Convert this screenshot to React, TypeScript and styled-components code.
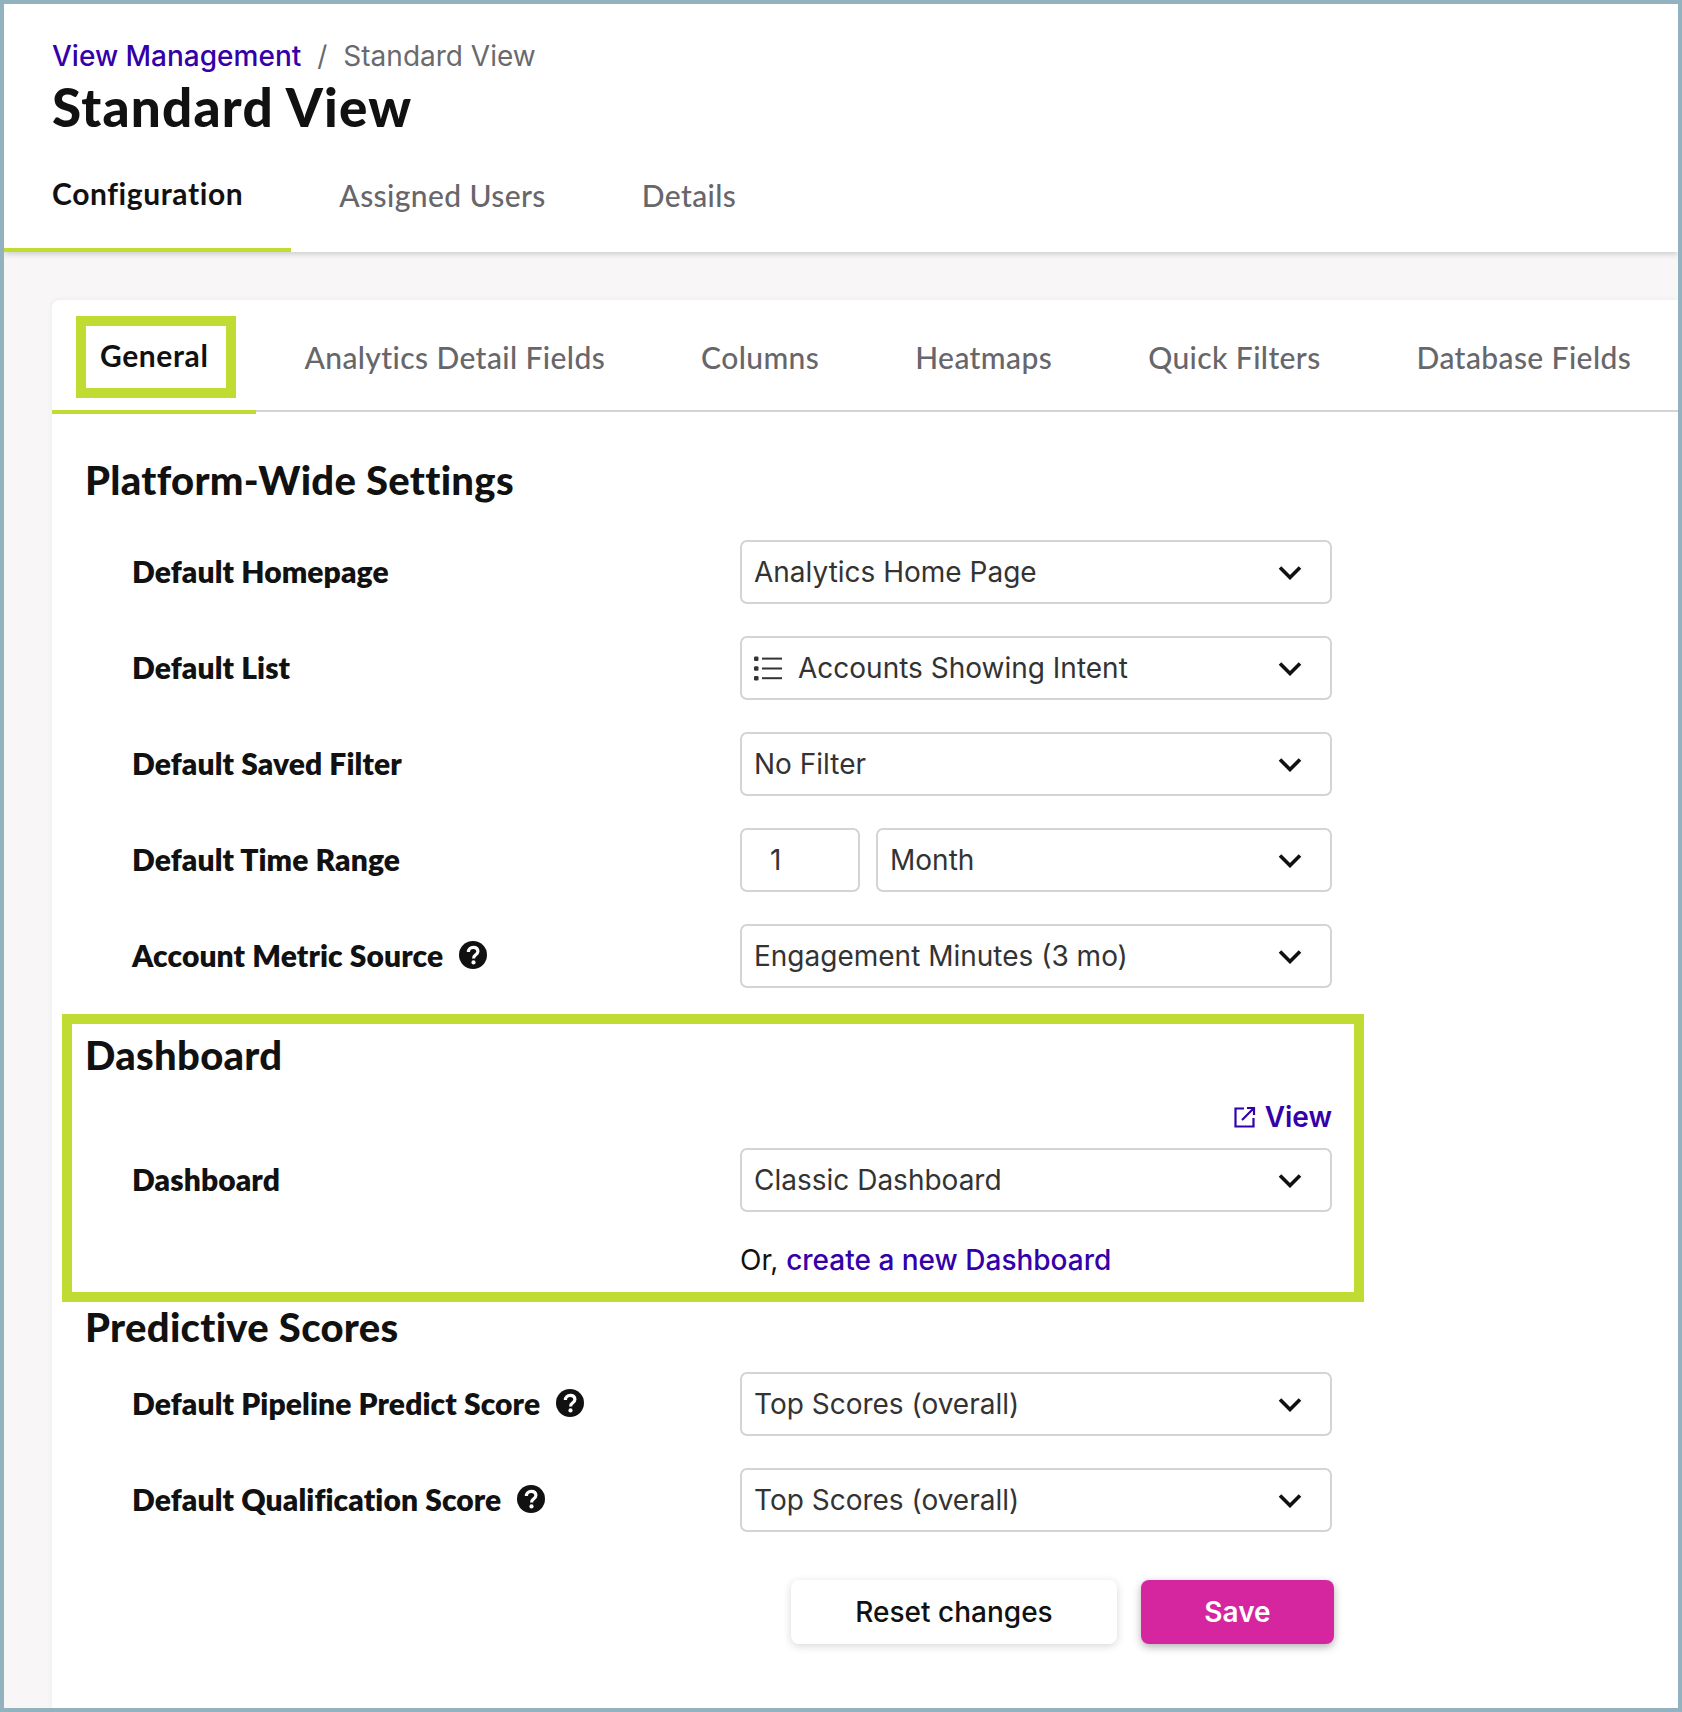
import React from "react";
import styled, { createGlobalStyle } from "styled-components";

const GlobalStyle = createGlobalStyle`
  html, body {
    margin: 0;
    padding: 0;
    background: #fff;
  }
`

const Chevron = () => (
  <ChevronSvg viewBox="0 0 24 15" fill="none">
    <path d="M2 2.5 L12 12.5 L22 2.5" stroke="#111" strokeWidth="3.6" />
  </ChevronSvg>
);

const ListIcon = () => (
  <ListSvg viewBox="0 0 28 25" fill="#333">
    <rect x="0" y="0.5" width="4.5" height="4.5" rx="1.2" />
    <rect x="0" y="10.2" width="4.5" height="4.5" rx="1.2" />
    <rect x="0" y="20" width="4.5" height="4.5" rx="1.2" />
    <rect x="8" y="1.6" width="20" height="2" />
    <rect x="8" y="11.5" width="20" height="2" />
    <rect x="8" y="21.2" width="20" height="2" />
  </ListSvg>
);

const HelpIcon = () => (
  <HelpSvg viewBox="0 0 28 28">
    <circle cx="14" cy="14" r="14" fill="#111" />
    <path d="M9.4 11 C9.4 8 11.5 6.4 14.2 6.4 C17 6.4 18.9 8 18.9 10.6 C18.9 12.4 17.8 13.3 16.4 14.2 C15.2 15 14.6 15.6 14.6 17.4" fill="none" stroke="#fff" strokeWidth="3.2" />
    <circle cx="14.5" cy="21.4" r="2.1" fill="#fff" />
  </HelpSvg>
);

const ExternalIcon = () => (
  <ExternalSvg viewBox="0 0 22 22" fill="none" stroke="#3300aa" strokeWidth="2.2">
    <path d="M10 2.5 H1.5 V20.5 H19.5 V12" />
    <path d="M8 14 L20 2 M13 2 H20 V9" />
  </ExternalSvg>
);

const Select = ({ value, icon }: { value: string; icon?: boolean }) => (
  <SelectBox>
    {icon && <ListIcon />}
    <SelectValue>{value}</SelectValue>
    <Chevron />
  </SelectBox>
);

export default function App() {
  return (
    <Frame>
      <GlobalStyle />
      <Header>
        <Breadcrumb>
          <Crumb>View Management</Crumb>
          <CrumbSlash>/</CrumbSlash>
          <span>Standard View</span>
        </Breadcrumb>
        <Title>Standard View</Title>
        <TopTabs>
          <TopTab $active>Configuration</TopTab>
          <TopTab>Assigned Users</TopTab>
          <TopTab>Details</TopTab>
        </TopTabs>
      </Header>
      <Body>
        <Card>
          <SubTabs>
            <SubTab $active>General</SubTab>
            <SubTab>Analytics Detail Fields</SubTab>
            <SubTab>Columns</SubTab>
            <SubTab>Heatmaps</SubTab>
            <SubTab>Quick Filters</SubTab>
            <SubTab>Database Fields</SubTab>
          </SubTabs>
          <Content>
            <SectionTitle>Platform-Wide Settings</SectionTitle>
            <Rows>
              <Row>
                <Label>Default Homepage</Label>
                <Select value="Analytics Home Page" />
              </Row>
              <Row>
                <Label>Default List</Label>
                <Select value="Accounts Showing Intent" icon />
              </Row>
              <Row>
                <Label>Default Saved Filter</Label>
                <Select value="No Filter" />
              </Row>
              <Row>
                <Label>Default Time Range</Label>
                <TimeRange>
                  <NumberBox>1</NumberBox>
                  <Select value="Month" />
                </TimeRange>
              </Row>
              <Row>
                <Label>
                  Account Metric Source
                  <HelpIcon />
                </Label>
                <Select value="Engagement Minutes (3 mo)" />
              </Row>
            </Rows>
            <Highlight>
              <SectionTitle>Dashboard</SectionTitle>
              <ViewLinkRow>
                <ExternalIcon />
                <ViewText>View</ViewText>
              </ViewLinkRow>
              <Row>
                <Label>Dashboard</Label>
                <Select value="Classic Dashboard" />
              </Row>
              <OrRow>
                Or, <LinkText>create a new Dashboard</LinkText>
              </OrRow>
            </Highlight>
            <PredictiveTitle>Predictive Scores</PredictiveTitle>
            <PredictiveRows>
              <Row>
                <Label>
                  Default Pipeline Predict Score
                  <HelpIcon />
                </Label>
                <Select value="Top Scores (overall)" />
              </Row>
              <Row>
                <Label>
                  Default Qualification Score
                  <HelpIcon />
                </Label>
                <Select value="Top Scores (overall)" />
              </Row>
            </PredictiveRows>
            <Actions>
              <ResetButton>Reset changes</ResetButton>
              <SaveButton>Save</SaveButton>
            </Actions>
          </Content>
        </Card>
      </Body>
    </Frame>
  );
}

const Frame = styled.div`
  box-sizing: border-box;
  width: 1682px;
  height: 1712px;
  border: 4px solid #93b2c0;
  overflow: hidden;
  display: flex;
  flex-direction: column;
  background: #f8f6f7;
  font-family: "Inter", "Liberation Sans", sans-serif;
`
const Header = styled.header`
  position: relative;
  z-index: 1;
  box-sizing: border-box;
  height: 248px;
  background: #fff;
  box-shadow: 0 2px 6px rgba(0, 0, 0, 0.18);
  padding-top: 35px;
  display: flex;
  flex-direction: column;
`
const Breadcrumb = styled.div`
  padding-left: 48px;
  display: flex;
  align-items: center;
  height: 34px;
  font-size: 28px;
  color: #6a6a6e;
`
const Crumb = styled.span`
  color: #3300aa;
  font-weight: 500;
`
const CrumbSlash = styled.span`
  margin: 0 16px;
`
const Title = styled.h1`
  margin: 9px 0 0;
  padding-left: 48px;
  font-family: "Lato", sans-serif;
  font-weight: 900;
  font-size: 53px;
  letter-spacing: 1.2px;
  line-height: 50px;
  color: #111;
`
const TopTabs = styled.nav`
  margin-top: auto;
  display: flex;
`
const TopTab = styled.div<{ $active?: boolean }>`
  box-sizing: border-box;
  height: 90px;
  padding: ${p => (p.$active ? "13px" : "15px")} 48px 0;
  font-family: "Lato", sans-serif;
  font-weight: ${p => (p.$active ? 700 : 500)};
  font-size: 30px;
  letter-spacing: ${p => (p.$active ? "0.6px" : "0.4px")};
  line-height: 36px;
  color: ${p => (p.$active ? "#111" : "#66666b")};
  border-bottom: 4px solid ${p => (p.$active ? "#c0dc33" : "transparent")};
`
const Body = styled.main`
  flex: 1;
  min-height: 0;
  padding: 48px 0 0 48px;
`
const Card = styled.section`
  height: 100%;
  background: #fff;
  border-radius: 8px 0 0 0;
  box-shadow: 0 0 6px rgba(0, 0, 0, 0.06);
`
const SubTabs = styled.nav`
  display: flex;
  height: 112px;
  box-sizing: border-box;
  border-bottom: 2px solid #d4d4d4;
`
const SubTab = styled.div<{ $active?: boolean }>`
  position: relative;
  box-sizing: border-box;
  height: 114px;
  padding: ${p => (p.$active ? "38px" : "40px")} 48px 0;
  font-family: "Lato", sans-serif;
  font-weight: ${p => (p.$active ? 700 : 500)};
  font-size: 30px;
  letter-spacing: ${p => (p.$active ? "0.6px" : "0.4px")};
  line-height: 34px;
  color: ${p => (p.$active ? "#111" : "#66666b")};
  white-space: nowrap;
  border-bottom: 4px solid ${p => (p.$active ? "#c0dc33" : "transparent")};
  ${p =>
    p.$active &&
    `&::before {
      content: "";
      position: absolute;
      left: 24px;
      top: 16px;
      box-sizing: border-box;
      width: 160px;
      height: 82px;
      border: 10px solid #c0dc33;
    }`}
`
const Content = styled.div`
  padding: 46px 0 0 33px;
`
const SectionTitle = styled.h2`
  margin: 0;
  height: 44px;
  font-family: "Lato", sans-serif;
  font-weight: 900;
  font-size: 40px;
  letter-spacing: 0.3px;
  line-height: 44px;
  color: #111;
`
const PredictiveTitle = styled(SectionTitle)`
  margin-top: 3px;
`
const Rows = styled.div`
  margin-top: 38px;
  display: flex;
  flex-direction: column;
  gap: 32px;
`
const PredictiveRows = styled(Rows)`
  margin-top: 23px;
`
const Row = styled.div`
  box-sizing: border-box;
  width: 1247px;
  padding-left: 47px;
  display: grid;
  grid-template-columns: 608px 592px;
  align-items: center;
`
const Label = styled.div`
  display: flex;
  align-items: center;
  gap: 16px;
  padding-bottom: 2px;
  font-family: "Lato", sans-serif;
  font-weight: 800;
  font-size: 30px;
  letter-spacing: 0.1px;
  color: #111;
`
const SelectBox = styled.div`
  flex: 1;
  box-sizing: border-box;
  height: 64px;
  padding: 0 28px 0 12px;
  display: flex;
  align-items: center;
  border: 2px solid #d4d4d4;
  border-radius: 7px;
  background: #fff;
`
const SelectValue = styled.span`
  flex: 1;
  font-size: 28px;
  color: #333;
`
const ChevronSvg = styled.svg`
  width: 24px;
  height: 15px;
`
const ListSvg = styled.svg`
  width: 28px;
  height: 25px;
  margin-right: 16px;
`
const HelpSvg = styled.svg`
  width: 28px;
  height: 28px;
`
const ExternalSvg = styled.svg`
  width: 22px;
  height: 22px;
`
const TimeRange = styled.div`
  display: flex;
  gap: 16px;
`
const NumberBox = styled.div`
  box-sizing: border-box;
  width: 120px;
  height: 64px;
  padding-left: 28px;
  display: flex;
  align-items: center;
  border: 2px solid #d4d4d4;
  border-radius: 7px;
  font-size: 28px;
  color: #333;
`
const Highlight = styled.div`
  box-sizing: border-box;
  width: 1302px;
  height: 288px;
  margin: 26px 0 0 -23px;
  padding: 9px 0 0 13px;
  border: 10px solid #c0dc33;
`
const ViewLinkRow = styled.div`
  box-sizing: border-box;
  width: 1247px;
  margin: 23px 0 14px;
  height: 34px;
  display: flex;
  justify-content: flex-end;
  align-items: center;
  gap: 9px;
  font-size: 28px;
`
const LinkText = styled.span`
  color: #3300aa;
  font-weight: 500;
`
const ViewText = styled(LinkText)`
  font-weight: 600;
`
const OrRow = styled.div`
  margin: 31px 0 0 655px;
  font-size: 28px;
  line-height: 34px;
  color: #111;
`
const Actions = styled.div`
  width: 1249px;
  margin-top: 48px;
  display: flex;
  justify-content: flex-end;
  gap: 24px;
`
const ResetButton = styled.button`
  width: 326px;
  height: 64px;
  border: 0;
  border-radius: 8px;
  background: #fff;
  font-family: "Inter", sans-serif;
  font-size: 28px;
  font-weight: 500;
  color: #111;
  box-shadow: 0 2px 8px rgba(0, 0, 0, 0.16);
`
const SaveButton = styled(ResetButton)`
  width: 193px;
  background: #d5269f;
  color: #fff;
  font-weight: 600;
  box-shadow: 0 3px 8px rgba(0, 0, 0, 0.3);
`
